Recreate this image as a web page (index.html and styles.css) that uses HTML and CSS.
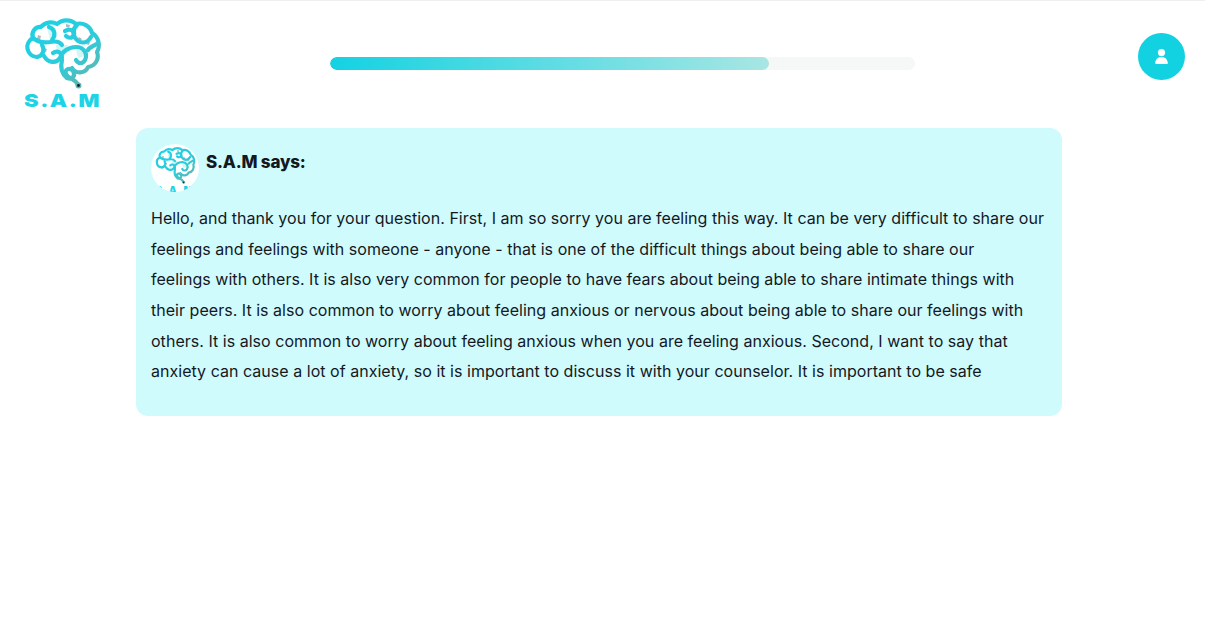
FILE: index.html
```html
<!DOCTYPE html>
<html lang="en">
<head>
    <meta charset="UTF-8">
    <meta name="viewport" content="width=device-width, initial-scale=1.0">
    <title>S.A.M</title>
    <link rel="stylesheet" href="styles.css">
</head>
<body>

<svg class="defs" width="0" height="0" aria-hidden="true">
    <defs>
        <linearGradient id="brainStroke" gradientUnits="userSpaceOnUse" x1="40" y1="30" x2="85" y2="85">
            <stop offset="0" stop-color="#1fd0e3"/>
            <stop offset="0.6" stop-color="#2fcbd9"/>
            <stop offset="1" stop-color="#62b5ad"/>
        </linearGradient>
        <symbol id="brain" viewBox="20 15 84 75">
            <path class="brain-shade" d="M47 28h8l2 9-7 2zM56 45h12l-3 7-8 1zM76 50h8l1 6-7 2z"/>
            <path class="brain-grey" d="M38 35l3 1-1 4-3-1zM66 24l4 1-1 3-3-1zM79 37l3 2-2 3-3-2zM44 48l3 1-1 3-3-1zM87 41l3 1-1 3-3-1z"/>
            <g class="brain-lines">
                <path d="M37 57 A10 10 0 0 1 33 38 A8 8 0 0 1 41 27 A13 13 0 0 1 57 24 A14 14 0 0 1 76 24 A13 13 0 0 1 92 33 A14 14 0 0 1 97 52 A11 11 0 0 1 88 67 A9 9 0 0 1 72 68"/>
                <path d="M37 57 C43 56 45 50 42 45"/>
                <path d="M33 38 C38 42 44 43 50 42 C55 41 60 42 62 45"/>
                <path d="M49 27 C55 29 56 35 52 40"/>
                <path d="M65 31 C71 28 75 31 74 35 C72 39 68 38 66 36"/>
                <path d="M77 25 C72 29 72 36 78 41 C83 44 88 42 91 37"/>
                <path d="M44 56 C48 63 56 64 60 58 C62 52 68 47 76 47 C84 47 88 54 85 60 C83 64 78 64 76 60"/>
                <path d="M53 53 C57 50 62 52 62 58"/>
                <path d="M98 43 C95 46 90 46 88 50"/>
                <path d="M62 60 C60 68 62 74 67 78 C72 80 76 76 73 71 C70 67 64 69 66 74 C68 79 75 78 78 85"/>
            </g>
            <circle class="brain-node" cx="78.500" cy="85.500" r="2.200"/>
        </symbol>
    </defs>
</svg>

<header class="top-bar">
    <div class="logo">
        <svg class="logo-brain"><use href="#brain"/></svg>
        <span class="logo-name">S.A.M</span>
    </div>
    <div class="progress">
        <div class="progress-fill" style="width: 75%"></div>
    </div>
    <button class="user-btn" aria-label="Account">
        <svg viewBox="0 0 13 15">
            <circle cx="6.500" cy="3.600" r="3.600"/>
            <path d="M.2 13.800C.6 10.500 3 8.300 5 8.300h3c2 0 4.400 2.200 4.800 5.500a1 1 0 0 1-1 1.200H1.200a1 1 0 0 1-1-1.200z"/>
        </svg>
    </button>
</header>

<main class="container">
    <div class="message">
        <div class="message-head">
            <div class="avatar">
                <svg class="avatar-brain"><use href="#brain"/></svg>
                <span class="avatar-name">S.A.M</span>
            </div>
            <h2>S.A.M says:</h2>
        </div>
        <p>Hello, and thank you for your question. First, I am so sorry you are feeling this way. It can be very difficult to share our<br>
        feelings and feelings with someone - anyone - that is one of the difficult things about being able to share our<br>
        feelings with others. It is also very common for people to have fears about being able to share intimate things with<br>
        their peers. It is also common to worry about feeling anxious or nervous about being able to share our feelings with<br>
        others. It is also common to worry about feeling anxious when you are feeling anxious. Second, I want to say that<br>
        anxiety can cause a lot of anxiety, so it is important to discuss it with your counselor. It is important to be safe</p>
    </div>
</main>

</body>
</html>
```

FILE: styles.css
```css
body {
    font-family: Inter, "Noto Sans", sans-serif;
    margin: 0;
    padding: 0;
    background-color: #fff;
    color: #14181f;
    border-top: 1px solid #efefef;
}
.defs {
    position: absolute;
}
.top-bar {
    display: flex;
    align-items: flex-start;
    justify-content: space-between;
    padding: 14px 20px 0;
    height: 95px;
}
.logo {
    width: 84px;
    display: flex;
    flex-direction: column;
    align-items: center;
}
.logo-brain {
    width: 84px;
    height: 75px;
}
.logo-name {
    font-size: 18px;
    font-weight: 900;
    letter-spacing: 1.2px;
    color: #1fd3e6;
    line-height: 18px;
    margin-top: 2px;
    transform: scaleX(1.22);
}
.progress {
    width: 585px;
    height: 13px;
    margin: 42px 0 0 3px;
    border-radius: 7px;
    background-color: #f6f7f7;
    overflow: hidden;
}
.progress-fill {
    height: 100%;
    border-radius: 7px;
    background: linear-gradient(90deg, #14d2e2, #a8e6e4);
}
.user-btn {
    width: 47px;
    height: 47px;
    margin-top: 18px;
    padding: 0;
    border: none;
    border-radius: 50%;
    background-color: #12d2e2;
    display: flex;
    align-items: center;
    justify-content: center;
}
.user-btn svg {
    fill: #fff;
    width: 13px;
    height: 15px;
}
.container {
    width: 926px;
    margin: 18px 0 0 136px;
}
.message {
    background-color: #cffbfd;
    border-radius: 12px;
    padding: 16px 15px 29px;
}
.message-head {
    display: flex;
    align-items: flex-start;
    gap: 7px;
}
.avatar {
    width: 48px;
    height: 48px;
    border-radius: 50%;
    background-color: #fff;
    overflow: hidden;
    display: flex;
    flex-direction: column;
    align-items: center;
}
.avatar-brain {
    width: 44px;
    height: 40px;
    flex: none;
    margin-top: 1px;
}
.avatar-name {
    font-size: 10px;
    line-height: 10px;
    font-weight: 900;
    letter-spacing: 1.5px;
    color: #1fd3e6;
}
.message-head h2 {
    margin: 6px 0 0;
    font-size: 17px;
    line-height: 24px;
    font-weight: 800;
    letter-spacing: -0.2px;
}
.message p {
    margin: 11.3px 0 0;
    font-size: 16px;
    line-height: 30.6px;
    letter-spacing: 0.03px;
    white-space: nowrap;
}
.brain-lines {
    fill: none;
    stroke: url(#brainStroke);
    stroke-width: 4.200;
    stroke-linecap: round;
    stroke-linejoin: round;
}
.brain-shade {
    fill: #d4f5f7;
}
.brain-grey {
    fill: #a9bcc0;
}
.brain-node {
    fill: #123;
    stroke: #5fb5ad;
    stroke-width: 1.500;
}
```
